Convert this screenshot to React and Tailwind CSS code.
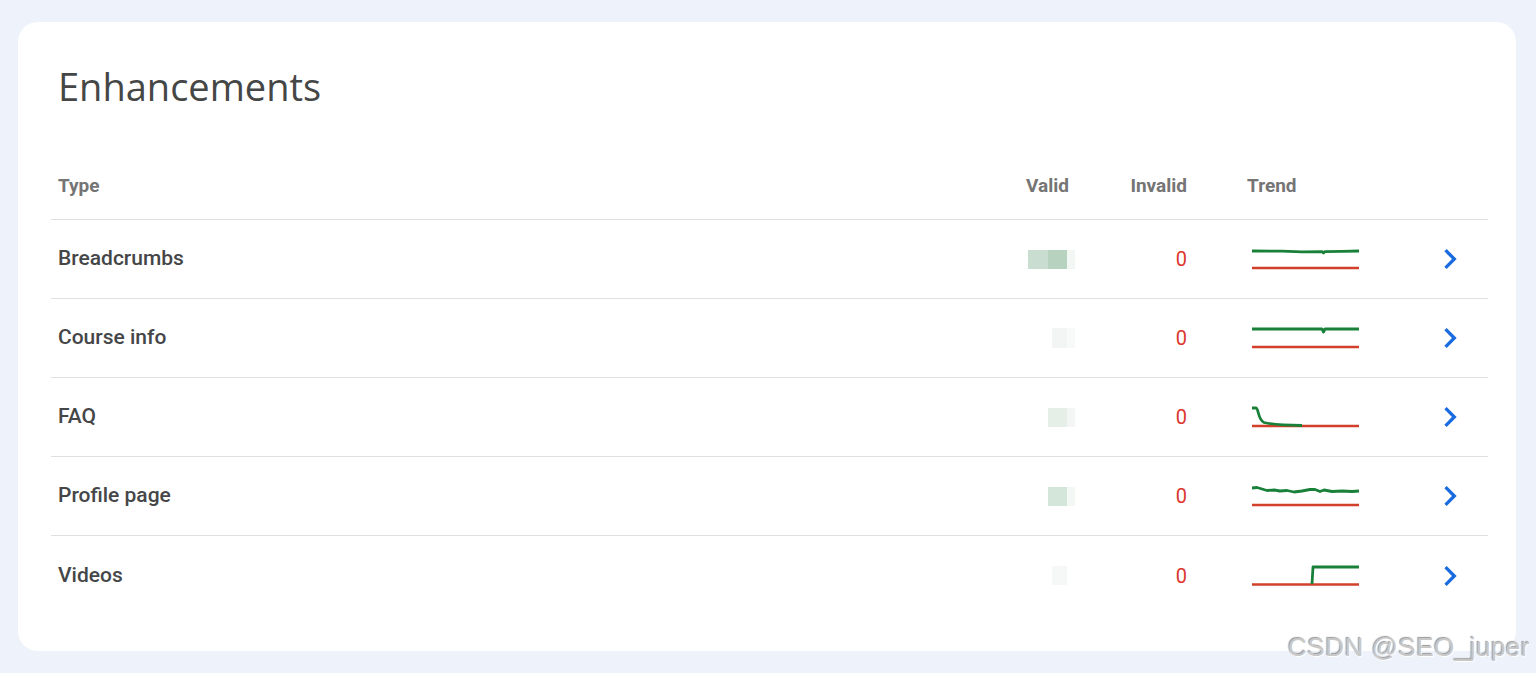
const rows = [
  {
    name: "Breadcrumbs",
    blocks: [
      { w: 20, h: 19, c: "bg-[#c9ddd0]" },
      { w: 19, h: 19, c: "bg-[#b8d2c0]" },
      { w: 8, h: 19, c: "bg-[#f3f7f4]" },
    ],
    green: "M0 3 L30 3.2 L50 3.8 L70 3.6 L71.5 5 L73 3.6 L90 3.3 L107 3",
    red: 20,
  },
  {
    name: "Course info",
    blocks: [
      { w: 15, h: 20, c: "bg-[#f2f5f3]" },
      { w: 8, h: 20, c: "bg-[#f8faf9]" },
    ],
    green: "M0 2 H70 L71.5 5 L73 2 H107",
    red: 20,
  },
  {
    name: "FAQ",
    blocks: [
      { w: 19, h: 19, c: "bg-[#e6eee8]" },
      { w: 8, h: 19, c: "bg-[#f3f6f4]" },
    ],
    green: "M0 2 H4 C6.5 2 6 14 12 16.5 C20 18.5 32 19 50 19.5",
    red: 20,
  },
  {
    name: "Profile page",
    blocks: [
      { w: 19, h: 19, c: "bg-[#d4e6d9]" },
      { w: 8, h: 19, c: "bg-[#f4f8f5]" },
    ],
    green:
      "M0 3 L5 2.5 L10 4 L15 5.5 L22 5 L28 6 L35 5.5 L42 7 L50 6 L58 4.5 L63 4.5 L68 6.5 L72 5 L80 6.5 L90 6 L100 6.5 L107 6",
    red: 20,
  },
  {
    name: "Videos",
    blocks: [
      { w: 15, h: 19, c: "bg-[#f5f8f6]" },
      { w: 8, h: 19, c: "bg-transparent" },
    ],
    green: "M60 19 L61 2 H107",
    red: 19.5,
  },
];

function Chevron() {
  return (
    <svg width="40" height="40" viewBox="0 0 24 24" fill="#1a6be0">
      <path d="M10 6 8.59 7.41 13.17 12l-4.58 4.59L10 18l6-6z" />
    </svg>
  );
}

export default function App() {
  return (
    <div
      className="relative w-[1536px] h-[673px] bg-[#eef2fa] pl-[18px] pt-[22px] overflow-hidden"
      style={{ fontFamily: "Roboto, 'Liberation Sans', sans-serif" }}
    >
      <div className="w-[1498px] h-[629px] bg-white rounded-[20px] pl-[33px] pr-[28px] pt-[40px]">
        <h1
          className="pl-[7px] text-[38px] leading-[48px] text-[#454746] font-normal"
          style={{ fontFamily: "'Open Sans', sans-serif" }}
        >
          Enhancements
        </h1>

        <div className="mt-[43px]">
          <div className="flex items-center h-[67px] border-b border-[#e0e0e0] text-[19px] font-bold text-[#757575]">
            <div className="flex-1 pl-[7px]">Type</div>
            <div className="w-[100px] text-right">Valid</div>
            <div className="w-[118px] text-right">Invalid</div>
            <div className="w-[233px] pl-[60px]">Trend</div>
            <div className="w-[68px]" />
          </div>

          {rows.map((r, i) => (
            <div
              key={r.name}
              className={`flex items-center h-[79px] ${
                i < rows.length - 1 ? "border-b border-[#e0e0e0]" : ""
              }`}
            >
              <div className="flex-1 pl-[7px] text-[21px] font-medium text-[#444648]">
                {r.name}
              </div>
              <div className="w-[100px] flex justify-end">
                <div className="flex mr-[-6px]">
                  {r.blocks.map((b, j) => (
                    <div
                      key={j}
                      className={b.c}
                      style={{ width: b.w, height: b.h }}
                    />
                  ))}
                </div>
              </div>
              <div className="w-[118px] text-right text-[20px] text-[#dc362e]">
                0
              </div>
              <div className="w-[233px] pl-[65px] flex items-center">
                <svg width="107" height="22" viewBox="0 0 107 22" fill="none">
                  <path
                    d={`M0 ${r.red} H107`}
                    stroke="#d23f2a"
                    strokeWidth="2.5"
                  />
                  <path
                    d={r.green}
                    stroke="#188038"
                    strokeWidth="2.8"
                    strokeLinejoin="round"
                  />
                </svg>
              </div>
              <div className="w-[68px] pl-[10px] flex items-center">
                <Chevron />
              </div>
            </div>
          ))}
        </div>
      </div>

      <div
        className="absolute right-[6px] bottom-[11px] text-[26px] leading-[30px] text-[#c8c8c8] tracking-[0.5px]"
        style={{
          fontFamily: "'Liberation Sans', Arial, sans-serif",
          textShadow: "1px 1px 1px #ffffff, -1px -1px 1px #9a9a9a",
        }}
      >
        CSDN @SEO_juper
      </div>
    </div>
  );
}
